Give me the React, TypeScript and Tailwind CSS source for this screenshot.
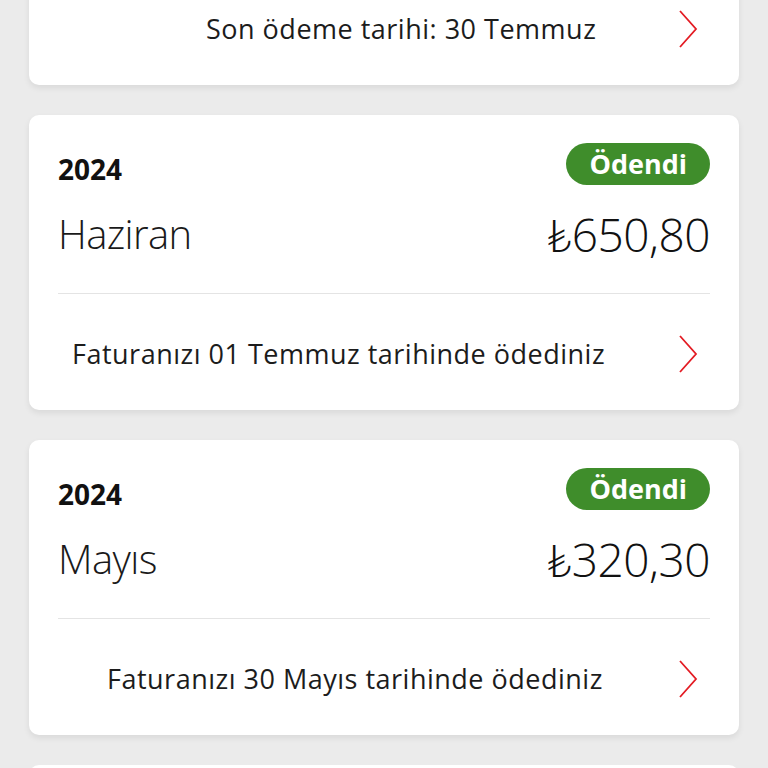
import React from 'react';

const Chevron = () => (
  <svg width="20" height="38" viewBox="0 0 20 38" fill="none" className="shrink-0">
    <path d="M2 1 L18 19 L2 37" stroke="#e31b23" strokeWidth="1.8" strokeLinejoin="miter" />
  </svg>
);

type Bill = { year: string; month: string; amount: string; note: string; pad: string };

const bills: Bill[] = [
  { year: '2024', month: 'Haziran', amount: '650,80', note: 'Faturanızı 01 Temmuz tarihinde ödediniz', pad: 'pl-[14px]' },
  { year: '2024', month: 'Mayıs', amount: '320,30', note: 'Faturanızı 30 Mayıs tarihinde ödediniz', pad: 'pl-[49px]' },
];

const Footer = ({ text, pad }: { text: string; pad: string }) => (
  <div className="flex h-[116px] items-center justify-between pt-[4px] pr-[12px]">
    <span className={`${pad} text-[27px] text-[#1c1c1c] tracking-[0.5px]`}>{text}</span>
    <Chevron />
  </div>
);

const BillCard = ({ bill }: { bill: Bill }) => (
  <div className="rounded-[10px] bg-white px-[29px] shadow-[0_3px_6px_rgba(0,0,0,0.08)]">
    <div className="flex items-end justify-between pt-[28px]">
      <span className="mb-[2px] text-[28px] leading-none font-bold text-[#111]">{bill.year}</span>
      <span className="flex h-[42px] items-center rounded-full bg-[#3f8d2b] px-[23px] text-[27px] font-bold text-white">
        Ödendi
      </span>
    </div>
    <div className="mt-[25px] flex items-center justify-between border-b border-[#e4e4e4] pb-[35px]">
      <span className="text-[40px] leading-[48px] font-light tracking-[-0.6px] text-[#1a1a1a]">{bill.month}</span>
      <span className="text-[46px] leading-[48px] font-light tracking-[-0.5px] text-[#111]">₺{bill.amount}</span>
    </div>
    <Footer text={bill.note} pad={bill.pad} />
  </div>
);

export default function App() {
  return (
    <div
      className="h-[768px] overflow-hidden bg-[#ebebeb] px-[29px]"
      style={{ fontFamily: '"Open Sans", Lato, "DejaVu Sans", sans-serif' }}
    >
      <div className="flex flex-col gap-[30px]">
        <div className="-mt-[31px] rounded-[10px] bg-white px-[29px] shadow-[0_3px_6px_rgba(0,0,0,0.08)]">
          <Footer text="Son ödeme tarihi: 30 Temmuz" pad="pl-[148px]" />
        </div>
        {bills.map((b) => (
          <BillCard key={b.month} bill={b} />
        ))}
        <div className="h-[120px] rounded-[10px] bg-white" />
      </div>
    </div>
  );
}
